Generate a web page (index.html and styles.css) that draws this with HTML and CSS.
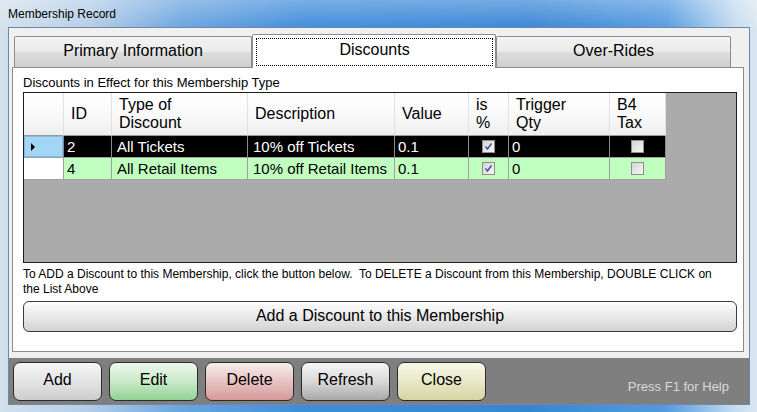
FILE: index.html
```html
<!DOCTYPE html>
<html lang="en">
<head>
    <meta charset="UTF-8">
    <title>Membership Record</title>
    <link rel="stylesheet" href="styles.css">
</head>
<body>
    <div class="window">
        <div class="titlebar">Membership Record</div>
        <div class="client">
            <div class="tabctl">
                <div class="tabstrip">
                    <div class="tab tab-first">Primary Information</div>
                    <div class="tab active"><div class="focus">Discounts</div></div>
                    <div class="tab tab-last">Over-Rides</div>
                </div>
                <div class="tabpage">
                    <div class="caption">Discounts in Effect for this Membership Type</div>
                    <div class="grid">
                        <div class="row head">
                            <div class="cell rh"></div>
                            <div class="cell">ID</div>
                            <div class="cell">Type of<br>Discount</div>
                            <div class="cell">Description</div>
                            <div class="cell">Value</div>
                            <div class="cell">is<br>%</div>
                            <div class="cell">Trigger<br>Qty</div>
                            <div class="cell">B4<br>Tax</div>
                        </div>
                        <div class="row selected">
                            <div class="cell rh current"><span class="arrow"></span></div>
                            <div class="cell num">2</div>
                            <div class="cell txt">All Tickets</div>
                            <div class="cell txt">10% off Tickets</div>
                            <div class="cell num">0.1</div>
                            <div class="cell chk"><span class="box"><svg width="11" height="11" viewBox="0 0 11 11"><path d="M2.5 5.5 L4.5 8 L8.5 2.5" fill="none" stroke="#3f5b98" stroke-width="1.6"/></svg></span></div>
                            <div class="cell num">0</div>
                            <div class="cell chk"><span class="box"></span></div>
                        </div>
                        <div class="row green">
                            <div class="cell rh"></div>
                            <div class="cell num">4</div>
                            <div class="cell txt">All Retail Items</div>
                            <div class="cell txt">10% off Retail Items</div>
                            <div class="cell num">0.1</div>
                            <div class="cell chk"><span class="box"><svg width="11" height="11" viewBox="0 0 11 11"><path d="M2.5 5.5 L4.5 8 L8.5 2.5" fill="none" stroke="#3f5b98" stroke-width="1.6"/></svg></span></div>
                            <div class="cell num">0</div>
                            <div class="cell chk"><span class="box"></span></div>
                        </div>
                    </div>
                    <p class="hint">To ADD a Discount to this Membership, click the button below.&nbsp; To DELETE a Discount from this Membership, DOUBLE CLICK on<br>the List Above</p>
                    <button class="wide">Add a Discount to this Membership</button>
                </div>
            </div>
            <div class="footer">
                <button class="btn btn-add">Add</button>
                <button class="btn btn-edit">Edit</button>
                <button class="btn btn-delete">Delete</button>
                <button class="btn btn-refresh">Refresh</button>
                <button class="btn btn-close">Close</button>
                <span class="help">Press F1 for Help</span>
            </div>
        </div>
    </div>
</body>
</html>
```
FILE: styles.css
```css
body { margin: 0; font-family: "Liberation Sans", Arial, sans-serif; color: #000; }

.window { width: 757px; height: 412px; box-sizing: border-box; padding: 0 7px 7px 8px; display: flex; flex-direction: column;
    background: linear-gradient(to bottom, rgba(255,255,255,0.3), rgba(255,255,255,0) 30px),
                linear-gradient(to right, #d3e1ed 0%, #b3cce6 12%, #6aa4df 24%, #3f8cdb 40%, #3885d5 70%, #559ae0 88%, #c4dbef 97%, #dbe7f1 100%); }
.titlebar { height: 27px; box-sizing: border-box; padding-top: 7px; font-size: 12px; line-height: 14px; }

.client { flex: 1; border: 1px solid #6e88a6; background: #f0f0f0; display: flex; flex-direction: column; }

.tabctl { padding: 6px 0 0 3px; }
.tabstrip { display: flex; align-items: flex-end; height: 33px; padding-left: 2px; }
.tab { height: 31px; box-sizing: border-box; border: 1px solid #898c95; border-bottom: none; border-radius: 2px 2px 0 0;
    background: linear-gradient(#f3f3f3, #ebebeb 48%, #dddddd 52%, #cfcfcf);
    font-size: 16px; display: flex; align-items: center; justify-content: center; padding-bottom: 3px; }
.tab-first { width: 238px; }
.tab-last { width: 235px; }
.tab.active { width: 244px; height: 34px; margin-bottom: -1px; position: relative; z-index: 1; background: #fff; padding: 3px 2px 2px 3px; }
.focus { flex: 1; align-self: stretch; border: 1px dotted #000; display: flex; align-items: center; justify-content: center; padding-bottom: 4px; }

.tabpage { width: 732px; height: 285px; box-sizing: border-box; border: 1px solid #898c95; background: #fff; padding: 7px 6px 0 10px; }
.caption { font-size: 13px; line-height: 15px; margin-bottom: 2px; }

.grid { height: 171px; box-sizing: border-box; border: 1px solid #1e1e1e; background: #ababab; }
.row { display: grid; grid-template-columns: 40px 48px 136px 147px 74px 40px 101px 56px; width: 642px; height: 22px; }
.cell { box-sizing: border-box; border-right: 1px solid #a0a0a0; border-bottom: 1px solid #a0a0a0; font-size: 15px; line-height: 21px; padding-left: 3px; white-space: nowrap; overflow: hidden; }
.cell.txt { padding-left: 5px; }

.row.head { height: 43px; }
.head .cell { background: linear-gradient(#ffffff, #f8f8f8 60%, #eeeeee); border-right-color: #e2e2e2; border-bottom: 1px solid #9c9c9c;
    font-size: 16px; line-height: 18px; padding-left: 7px; display: flex; align-items: center; }

.selected .cell { background: #000; color: #fff; border-right-color: #8a8a8a; }
.green .cell { background: #c0ffc0; }
.rh { background: #fff; }
.selected .rh.current { background: #a2d6f4; box-shadow: inset 0 0 0 1px #7cbfe8; display: flex; align-items: center; padding-left: 7px; }
.green .rh { background: #fff; }
.arrow { width: 0; height: 0; border-left: 4px solid #000; border-top: 4px solid transparent; border-bottom: 4px solid transparent; }

.chk { display: flex; align-items: center; justify-content: center; padding-left: 0; }
.box { width: 13px; height: 13px; box-sizing: border-box; border: 1px solid #8f8f8f; background: linear-gradient(135deg, #d4d4d4, #f7f7f7); display: flex; align-items: center; justify-content: center; }
.box svg { display: block; }

.hint { margin: 4px 0; font-size: 12px; line-height: 15px; white-space: nowrap; }
.wide { display: block; width: 100%; height: 31px; border: 1px solid #3c3c3c; border-radius: 6px; background: linear-gradient(#fdfdfd, #e9e9e9 50%, #d3d3d3);
    font-family: inherit; font-size: 16px; color: #000; padding: 0 0 2px; }

.footer { margin-top: auto; height: 46px; box-sizing: border-box; background: #7f7f7f; display: flex; align-items: flex-start; padding: 4px 0 0 4px; gap: 7px; }
.btn { width: 89px; height: 39px; border: 1px solid #2b2b2b; border-radius: 7px; font-family: inherit; font-size: 16px; color: #000; padding: 0 0 3px; }
.btn-add { background: linear-gradient(#f6f6f6, #e4e4e4 50%, #cdcdcd); }
.btn-edit { background: linear-gradient(#eef8ee, #c9e9c9 50%, #92d292); }
.btn-delete { background: linear-gradient(#f8ecec, #e7c3c3 50%, #d59a9a); }
.btn-refresh { background: linear-gradient(#f6f6f6, #d9d9d9 50%, #a8a8a8); }
.btn-close { background: linear-gradient(#f8f8ea, #e9e8c8 50%, #d6d4a4); }
.help { margin: 17px 20px 0 auto; font-size: 13px; line-height: 15px; color: #d9d9d9; }
```
